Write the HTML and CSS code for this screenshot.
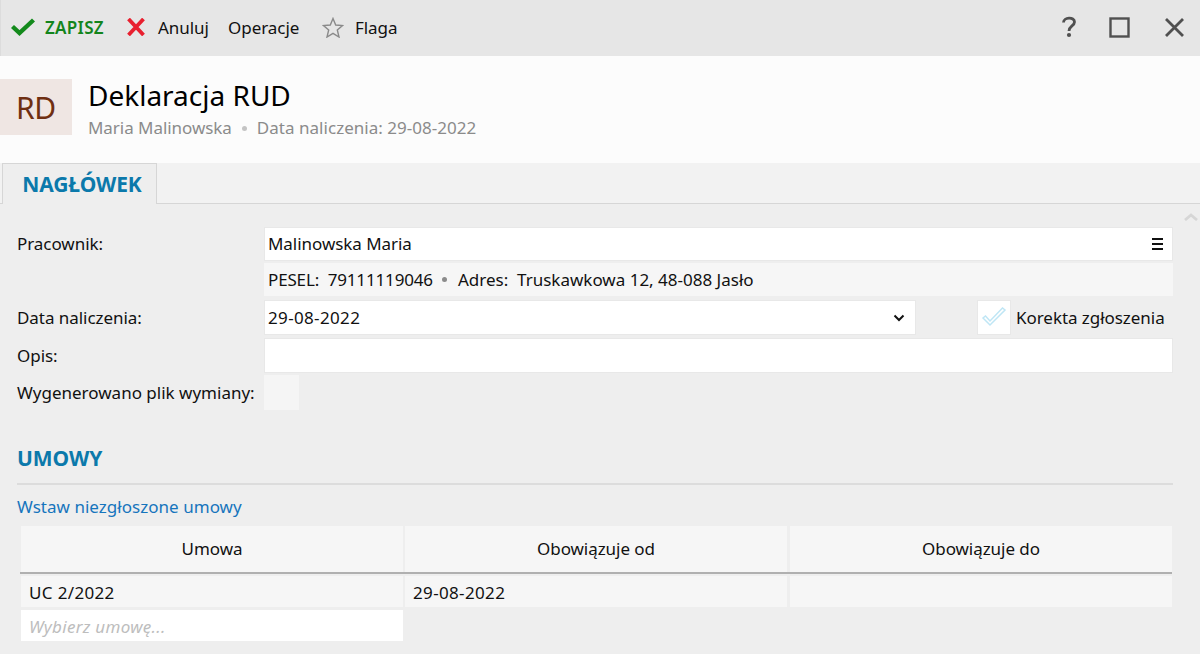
FILE: index.html
```html
<!DOCTYPE html>
<html lang="pl">
<head>
<meta charset="utf-8">
<title>Deklaracja RUD</title>
<link rel="stylesheet" href="styles.css">
</head>
<body>
<div class="app">
  <header class="toolbar">
    <div class="tool tool-save">
      <svg class="ic-check" width="24" height="18" viewBox="0 0 24 18"><path d="M1.5 8.5 L8.5 15 L22.5 2" fill="none" stroke="#138a1c" stroke-width="4.4"/></svg>
      <span class="save-label">ZAPISZ</span>
    </div>
    <div class="tool tool-cancel">
      <svg width="20" height="18" viewBox="0 0 20 18"><path d="M2.5 1 L17.5 17 M17.5 1 L2.5 17" fill="none" stroke="#e8202f" stroke-width="3.8"/></svg>
      <span>Anuluj</span>
    </div>
    <div class="tool tool-ops"><span>Operacje</span></div>
    <div class="tool tool-flag">
      <svg width="22" height="21" viewBox="0 0 22 21"><path d="M11 1.5 L13.7 8 L20.6 8.5 L15.3 13 L17 20 L11 16.3 L5 20 L6.7 13 L1.4 8.5 L8.3 8 Z" fill="none" stroke="#8a8a8a" stroke-width="1.4"/></svg>
      <span>Flaga</span>
    </div>
    <div class="win">
      <svg class="win-help" width="14" height="22" viewBox="0 0 14 22"><path d="M1.5 6.5 C1.5 1 12.5 0.5 12.5 6 C12.5 10 7 10 7 15" fill="none" stroke="#505050" stroke-width="2.8"/><circle cx="7" cy="19" r="2.1" fill="#505050"/></svg>
      <svg class="win-max" width="21" height="21" viewBox="0 0 21 21"><rect x="1.5" y="1.5" width="18" height="18" fill="none" stroke="#505050" stroke-width="2.4"/></svg>
      <svg class="win-close" width="21" height="21" viewBox="0 0 21 21"><path d="M2 2 L19 19 M19 2 L2 19" fill="none" stroke="#505050" stroke-width="2.8"/></svg>
    </div>
  </header>

  <section class="head">
    <div class="badge">RD</div>
    <div class="head-text">
      <h1>Deklaracja RUD</h1>
      <p class="sub"><span>Maria Malinowska</span><i class="dot"></i><span class="dated">Data naliczenia: 29-08-2022</span></p>
    </div>
  </section>

  <nav class="tabs"><div class="tab">NAGŁÓWEK</div></nav>

  <main class="content">
    <svg class="scroll-up" width="14" height="8" viewBox="0 0 14 8"><path d="M1 7 L7 2 L13 7" fill="none" stroke="#d6d6d6" stroke-width="2.8"/></svg>
    <div class="form">
      <label class="lbl lbl-p">Pracownik:</label>
      <div class="field input field-p"><span>Malinowska Maria</span>
        <span class="menu"><b></b><b></b><b></b></span>
      </div>
      <div class="info"><span class="pesel">PESEL:&nbsp; 79111119046</span><i class="dot dark"></i><span class="adres">Adres:&nbsp; Truskawkowa 12, 48-088 Jasło</span></div>

      <label class="lbl lbl-d">Data naliczenia:</label>
      <div class="date-row">
        <div class="field input field-d"><span class="date">29-08-2022</span>
          <svg width="12" height="8" viewBox="0 0 12 8"><path d="M1.5 1.5 L6 6 L10.5 1.5" fill="none" stroke="#111" stroke-width="2"/></svg>
        </div>
        <div class="chk-wrap">
          <span class="chk"><svg width="26" height="21" viewBox="0 0 26 21"><path d="M2 11 L9 18 L24 3 L21.5 1 L9 14 L4.5 9 Z" fill="#fff" stroke="#bfe6f5" stroke-width="1.5"/></svg></span>
          <span class="chk-label">Korekta zgłoszenia</span>
        </div>
      </div>

      <label class="lbl lbl-o">Opis:</label>
      <div class="field input field-o"></div>

      <label class="lbl lbl-w">Wygenerowano plik wymiany:</label>
      <div class="blank-chk"></div>
    </div>

    <h2 class="section">UMOWY</h2>
    <a class="link">Wstaw niezgłoszone umowy</a>

    <div class="table">
      <div class="th">Umowa</div>
      <div class="th">Obowiązuje od</div>
      <div class="th th-last">Obowiązuje do</div>
      <div class="rule"></div>
      <div class="td date">UC 2/2022</div>
      <div class="td date">29-08-2022</div>
      <div class="td td-last"></div>
      <div class="pick">Wybierz umowę...</div>
    </div>
  </main>
</div>
</body>
</html>
```
FILE: styles.css
```css
* { box-sizing: border-box; }
html, body { margin: 0; height: 100%; overflow: hidden; }
body { font-family: "Noto Sans", "Open Sans", sans-serif; font-size: 17px; letter-spacing: -.05px; color: #111; background: #eee; }
.app { width: 1200px; height: 654px; display: flex; flex-direction: column; }

.toolbar { height: 56px; background: #e6e6e6; display: flex; align-items: center; padding: 0 0 2px 11px; border-left: 1px solid #dcdcdc; }
.tool { display: flex; align-items: center; }
.tool-save { width: 114px; }
.ic-check { margin-right: 10px; margin-left: -1px; }
.save-label { color: #13851c; font-weight: 600; letter-spacing: .3px; }
.tool-cancel { width: 102px; }
.tool-cancel svg { margin-right: 12px; }
.tool-ops { width: 94px; }
.tool-flag svg { margin-right: 11px; }
.win { margin-left: auto; display: flex; align-items: center; padding-right: 15px; }
.win-max { margin-left: 33px; }
.win-close { margin-left: 34px; }

.head { height: 107px; background: #fcfcfc; display: flex; padding-top: 23px; }
.badge { width: 72px; height: 56px; background: #efe6e3; color: #6f2f12; font-size: 30px; display: flex; align-items: center; justify-content: center; letter-spacing: -.2px; }
.head-text { margin-left: 16px; margin-top: -3px; }
h1 { margin: 0; font-size: 28px; font-weight: 400; line-height: 38px; color: #000; letter-spacing: 0; }
.sub { margin: 2px 0 0; color: #8b8b8b; line-height: 24px; display: flex; align-items: center; }
.dated { letter-spacing: .03px; margin-left: -1px; }
.dot { display: inline-block; width: 5px; height: 5px; border-radius: 50%; background: #c4c4c4; margin: 0 11px 0 10px; }
.dot.dark { background: #8b8b8b; margin: 0 11px 0 9px; }

.tabs { height: 41px; background: #f2f2f2; border-bottom: 1px solid #d6d6d6; padding-left: 2px; }
.tab { width: 155px; height: 41px; background: #eee; border: 1px solid #d6d6d6; border-bottom: none; color: #0b79ab; font-weight: 700; font-size: 21px; text-align: center; line-height: 40px; letter-spacing: -.1px; padding-left: 5px; }

.content { flex: 1; position: relative; padding: 23px 27px 0 17px; background: #eee; }
.scroll-up { position: absolute; right: 2px; top: 9px; }

.form { display: grid; grid-template-columns: 247px 1fr; }
.lbl { display: flex; align-items: center; }
.lbl-p { height: 34px; padding-bottom: 2px; }
.lbl-d { height: 35px; }
.field { background: #fff; border: 1px solid #e8e8e8; display: flex; align-items: center; }
.field-p { height: 34px; padding: 0 9px 2px 3px; justify-content: space-between; position: relative; }
.menu { display: flex; flex-direction: column; gap: 3px; width: 11px; margin-top: 1px; }
.menu b { height: 2px; background: #111; }
.info { grid-column: 2; height: 33px; margin-top: 2px; background: #f6f6f6; padding-left: 4px; display: flex; align-items: center; }
.pesel { letter-spacing: -.15px; }
.adres { letter-spacing: 0; }
.date { letter-spacing: .35px; }
.date-row { display: flex; align-items: center; margin-top: 4px; grid-row: 3; grid-column: 2; height: 35px; }
.lbl-d { grid-row: 3; grid-column: 1; margin-top: 4px; }
.field-d { width: 652px; height: 35px; padding: 0 10px 0 3px; justify-content: space-between; }
.chk-wrap { margin-left: 61px; display: flex; align-items: center; white-space: nowrap; }
.chk { width: 34px; height: 35px; background: #fff; border: 1px solid #e8e8e8; display: flex; align-items: center; justify-content: center; }
.chk-label { margin-left: 5px; }
.lbl-o { height: 35px; margin-top: 3px; grid-row: 4; grid-column: 1; }
.field-o { height: 35px; margin-top: 3px; grid-row: 4; grid-column: 2; }
.lbl-w { height: 35px; margin-top: 2px; grid-row: 5; grid-column: 1; white-space: nowrap; letter-spacing: 0; }
.blank-chk { width: 35px; height: 35px; margin-top: 2px; background: #f5f5f5; grid-row: 5; grid-column: 2; }

.section { margin: 23px 0 0; height: 52px; width: 1156px; font-size: 21px; line-height: 50px; font-weight: 700; color: #0b79ab; border-bottom: 2px solid #dcdcdc; letter-spacing: -.05px; }
.link { display: block; margin-top: 10px; color: #1675bd; line-height: 24px; letter-spacing: .03px; }

.table { margin: 7px 0 0 4px; width: 1151px; display: grid; grid-template-columns: 382px 382px 383px; column-gap: 2px; }
.th { height: 46px; padding-bottom: 2px; background: #f6f6f6; display: flex; align-items: center; justify-content: center; }
.th-last { margin-left: 1px; }
.rule { grid-column: 1 / -1; height: 2px; background: #b0b0b0; margin: 0 0 2px -1px; }
.td { height: 31px; padding: 2px 0 0 8px; background: #f6f6f6; display: flex; align-items: center; }
.td-last { margin-left: 1px; }
.pick { margin-top: 3px; height: 31px; padding: 2px 0 0 8px; background: #fff; color: #bdbdbd; font-style: italic; letter-spacing: .3px; display: flex; align-items: center; }
```
